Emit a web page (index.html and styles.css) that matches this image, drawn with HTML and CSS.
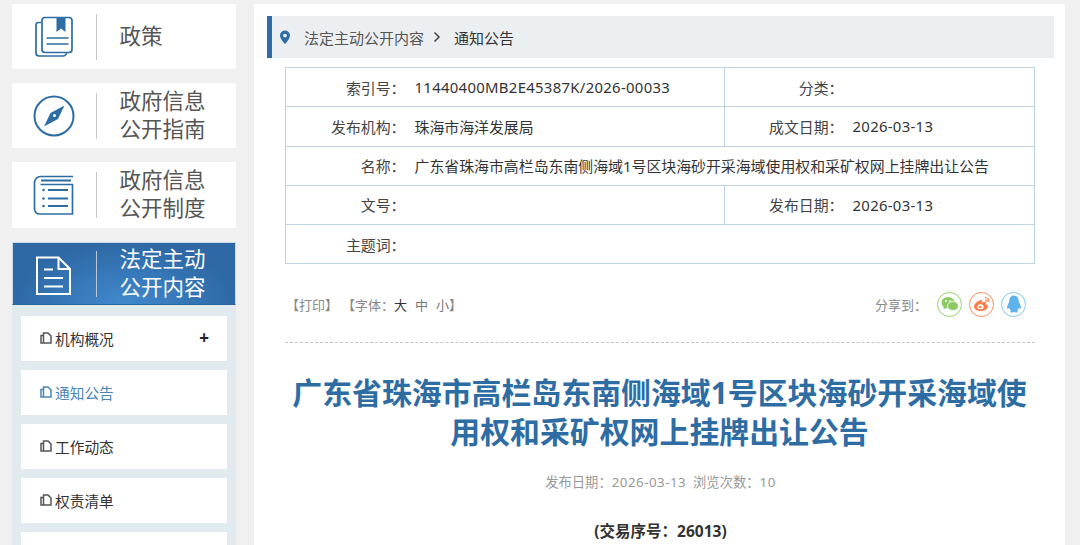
FILE: index.html
```html
<!DOCTYPE html>
<html lang="zh-CN">
<head>
<meta charset="utf-8">
<title>通知公告</title>
<link rel="stylesheet" href="styles.css">
</head>
<body>
<div class="page">
  <aside class="side">
    <a class="card">
      <span class="card-icon">
        <svg width="60" height="65" viewBox="0 0 60 65"><g fill="none" stroke="#2e6da4" stroke-width="1.700"><path d="M9 18.500H6.500a2.500 2.500 0 0 0-2.500 2.500V49a3 3 0 0 0 3 3H31a3.500 3.500 0 0 0 3.500-3.500"/><rect x="10" y="13.500" width="30" height="35" rx="3"/><path d="M14.500 34H36.500M14.500 40H36.500"/></g><path d="M24.500 13.500H33.500V28L29 24.500 24.500 28Z" fill="#2e6da4"/></svg>
      </span>
      <span class="card-text"><span>政策</span></span>
    </a>
    <a class="card">
      <span class="card-icon">
        <svg width="60" height="65" viewBox="0 0 60 65"><circle cx="22" cy="33" r="19.500" fill="none" stroke="#2e6da4" stroke-width="2"/><path d="M32.500 22.500 26 36 12 43.500 18.500 30Z" fill="#2e6da4"/><circle cx="22.500" cy="32.500" r="1.500" fill="#fff"/></svg>
      </span>
      <span class="card-text"><span>政府信息<br>公开指南</span></span>
    </a>
    <a class="card">
      <span class="card-icon">
        <svg width="60" height="66" viewBox="0 0 60 66"><g fill="none" stroke="#2e6da4"><path d="M41 14.500H8.500a6 6 0 0 0-6 6V47a5 5 0 0 0 5 5H40.500V22.500H8.500" stroke-width="1.700"/><path d="M9 18.500H39M16 28H36M16 36.500H36M16 44H36" stroke-width="2"/></g><g fill="#2e6da4"><circle cx="11.500" cy="28" r="1.300"/><circle cx="11.500" cy="36.500" r="1.300"/><circle cx="11.500" cy="44" r="1.300"/></g></svg>
      </span>
      <span class="card-text"><span>政府信息<br>公开制度</span></span>
    </a>
    <a class="card card-active">
      <span class="card-icon">
        <svg width="60" height="63" viewBox="0 0 60 63"><g fill="none" stroke="#fff" stroke-width="2"><path d="M6 14.500H27.500L39 26V51H6Z"/><path d="M27.500 14.500V26H39"/><path d="M13 26.500H22M13 35H32M13 43.500H32"/></g></svg>
      </span>
      <span class="card-text"><span>法定主动<br>公开内容</span></span>
    </a>
    <nav class="sub">
      <a class="sub-item">
        <svg class="copy" width="12" height="13" viewBox="0 0 12 13"><path d="M3.500 11H1V3.500H3.500M3.500 1H8L11 4V11H3.500Z" fill="none" stroke="currentColor" stroke-width="1.500"/></svg>
        <span>机构概况</span><b class="plus">+</b>
      </a>
      <a class="sub-item sub-current">
        <svg class="copy" width="12" height="13" viewBox="0 0 12 13"><path d="M3.500 11H1V3.500H3.500M3.500 1H8L11 4V11H3.500Z" fill="none" stroke="currentColor" stroke-width="1.500"/></svg>
        <span>通知公告</span>
      </a>
      <a class="sub-item">
        <svg class="copy" width="12" height="13" viewBox="0 0 12 13"><path d="M3.500 11H1V3.500H3.500M3.500 1H8L11 4V11H3.500Z" fill="none" stroke="currentColor" stroke-width="1.500"/></svg>
        <span>工作动态</span>
      </a>
      <a class="sub-item">
        <svg class="copy" width="12" height="13" viewBox="0 0 12 13"><path d="M3.500 11H1V3.500H3.500M3.500 1H8L11 4V11H3.500Z" fill="none" stroke="currentColor" stroke-width="1.500"/></svg>
        <span>权责清单</span>
      </a>
      <a class="sub-item"></a>
    </nav>
  </aside>

  <main class="panel">
    <div class="crumb">
      <svg class="pin" width="12" height="15" viewBox="0 0 12 15"><path fill-rule="evenodd" d="M6 0.500A5 5 0 0 1 11 5.500C11 9 6 14 6 14S1 9 1 5.500A5 5 0 0 1 6 0.500ZM6 3.700A1.900 1.900 0 1 0 6 7.500 1.900 1.900 0 0 0 6 3.700Z" fill="#2e6da4"/></svg>
      <span class="crumb-parent">法定主动公开内容</span>
      <svg class="chev" width="8" height="12" viewBox="0 0 8 12"><path d="M1.500 1.500 6 6 1.500 10.500" fill="none" stroke="#444" stroke-width="1.500"/></svg>
      <span class="crumb-current">通知公告</span>
    </div>

    <table class="info">
      <colgroup><col class="c1"><col class="c2"><col class="c3"><col class="c4"></colgroup>
      <tr><th>索引号&#xFF1A;</th><td class="num">11440400MB2E45387K/2026-00033</td><th>分类&#xFF1A;</th><td></td></tr>
      <tr><th>发布机构&#xFF1A;</th><td>珠海市海洋发展局</td><th>成文日期&#xFF1A;</th><td class="num">2026-03-13</td></tr>
      <tr><th>名称&#xFF1A;</th><td colspan="3">广东省珠海市高栏岛东南侧海域1号区块海砂开采海域使用权和采矿权网上挂牌出让公告</td></tr>
      <tr><th>文号&#xFF1A;</th><td></td><th>发布日期&#xFF1A;</th><td class="num">2026-03-13</td></tr>
      <tr><th>主题词&#xFF1A;</th><td colspan="3"></td></tr>
    </table>

    <div class="tools">
      <div class="tools-left">
        <span>【打印】</span>
        <span class="font-size">【字体&#xFF1A;<i class="big">大</i><i>中</i><i>小</i>】</span>
      </div>
      <div class="share">
        <span class="share-label">分享到&#xFF1A;</span>
        <span class="share-btn wx">
          <svg width="18" height="16" viewBox="0 0 18 16"><ellipse cx="7" cy="6.500" rx="6.500" ry="5.500" fill="#8ccb63"/><path d="M3 10 2.500 13.500 6.500 11Z" fill="#8ccb63"/><ellipse cx="12" cy="10" rx="5.500" ry="4.500" fill="#8ccb63" stroke="#fff" stroke-width=".8"/><circle cx="5" cy="5" r=".9" fill="#fff"/><circle cx="9" cy="5" r=".9" fill="#fff"/></svg>
        </span>
        <span class="share-btn wb">
          <svg width="18" height="16" viewBox="0 0 18 16"><path d="M7.500 4C3.500 5.500 1 8.500 1 10.500 1 13.500 4.500 15 8 15c4 0 7-2.300 7-4.500 0-1.500-1.300-2-2.300-2.300 1-2.200-.7-3.200-4-1.700.6-1.800.3-3.500-1.200-2.500Z" fill="#fa7d4a"/><ellipse cx="7.500" cy="10.800" rx="3.200" ry="2.500" fill="#fff"/><circle cx="7" cy="11" r="1.300" fill="#fa7d4a"/><path d="M12 1.500c2.700 0 4.500 2 4 4.700M12 3.800c1.200 0 2 .8 1.800 2" fill="none" stroke="#fa7d4a" stroke-width="1.200"/></svg>
        </span>
        <span class="share-btn qq">
          <svg width="16" height="18" viewBox="0 0 16 18"><path d="M8 .5C4.800.5 3.300 3 3.300 6 3.300 7.500 1 10 1 12.500 1 14 2 14 3 12.800 3.500 14 4 15 5 15.500 3.800 16 3.700 17.500 6 17.500 7 17.500 7.700 17 8 16.700 8.300 17 9 17.500 10 17.500 12.300 17.500 12.200 16 11 15.500 12 15 12.500 14 13 12.800 14 14 15 14 15 12.500 15 10 12.700 7.500 12.700 6 12.700 3 11.200.5 8 .5Z" fill="#5fb3ec"/></svg>
        </span>
      </div>
    </div>

    <h1 class="title">广东省珠海市高栏岛东南侧海域1号区块海砂开采海域使用权和采矿权网上挂牌出让公告</h1>
    <p class="meta">发布日期&#xFF1A;<span class="num">2026-03-13</span>&nbsp;&nbsp;浏览次数&#xFF1A;<span class="num">10</span></p>
    <p class="serial">(交易序号&#xFF1A;26013)</p>
  </main>
</div>
</body>
</html>
```
FILE: styles.css
```css
* { box-sizing: border-box; }
html, body { margin: 0; height: 545px; overflow: hidden; }
body {
  background: #f0f0f0;
  font-family: "Noto Sans", "Noto Sans CJK SC", sans-serif;
  color: #333;
}
.page { display: flex; height: 545px; overflow: hidden; }

/* sidebar */
.side { width: 224px; margin: 4px 0 0 12px; flex: none; }
.card {
  display: flex;
  align-items: center;
  height: 65px;
  background: #fff;
  margin-bottom: 14px;
  color: #555;
}
.card:nth-child(3) { height: 66px; }
.card-icon { width: 84px; flex: none; padding-left: 20px; height: 100%; display: flex; }
.card-icon svg { display: block; }
.card-text {
  border-left: 1px solid #c8c8c8;
  padding-left: 22.500px;
  height: 46px;
  display: flex;
  align-items: center;
  font-size: 21.500px;
  line-height: 28px;
}
.card-text span { padding-bottom: 2px; }
.card-active {
  height: 63px;
  margin-bottom: 0;
  color: #fff;
  border: 1px solid #c7dbe9;
  border-bottom-color: #2d659f;
  background: radial-gradient(ellipse 110px 60px at 50% 100%, #4189cd 0%, #2e69a6 100%);
}
.card-active .card-icon { padding-left: 18px; margin-top: -1px; margin-right: 0; }
.card-active .card-text { border-left-color: #b9c7d6; margin-left: -1px; }
.sub {
  background: #e1eaef;
  padding: 11px 9px 0;
  height: 240px;
  display: flex;
  flex-direction: column;
  gap: 9px;
}
.sub-item {
  flex: none;
  height: 45px;
  background: #fff;
  display: flex;
  align-items: center;
  padding-left: 19px;
  font-size: 14.700px;
  color: #333;
}
.sub-item span { margin-left: 3px; padding-bottom: 1px; }
.copy { color: #555; flex: none; }
.plus { margin-left: auto; margin-right: 18px; font-size: 17px; line-height: 1; color: #222; padding-bottom: 2px; }
.sub-current, .sub-current .copy { color: #4a86b8; }

/* main panel */
.panel {
  width: 811px;
  margin: 4px 0 0 18px;
  flex: none;
  background: #fff;
  padding: 12px 11px 0 13px;
  height: 541px;
  overflow: hidden;
}
.crumb {
  height: 42px;
  background: #eceff2;
  border-left: 5px solid #2e6da4;
  display: flex;
  align-items: center;
  padding-left: 7px;
  font-size: 15px;
}
.crumb-parent { margin-left: 13px; color: #555; }
.chev { margin: 0 13px 0 9px; }
.crumb-current { color: #333; }

.info {
  width: 750px;
  margin: 9px 0 0 18px;
  border-collapse: collapse;
  table-layout: fixed;
  font-size: 14.900px;
}
.c1 { width: 120px; }
.c2 { width: 319px; }
.c3 { width: 119px; }
.info th, .info td {
  border: 1px solid #bcd4e6;
  height: 39.250px;
  padding: 0;
  font-weight: 400;
  white-space: nowrap;
}
.info th { text-align: right; color: #444; border-right: 0; }
.info td { padding-left: 9px; border-left: 0; color: #333; }
.num { letter-spacing: .3px; }

.tools {
  margin: 0 0 0 18px;
  width: 750px;
  height: 79px;
  border-bottom: 1px dashed #c4c4c4;
  display: flex;
  justify-content: space-between;
  padding: 24px 9px 0 1px;
  font-size: 13px;
  color: #888;
}
.tools-left { display: flex; gap: 4px; height: 32px; align-items: center; }
.font-size i { font-style: normal; margin-left: 8px; color: #777; }
.font-size i.big { color: #333; margin-left: 0; }
.share { display: flex; align-items: center; height: 26px; margin-top: 3px; gap: 7px; }
.share-label { margin-right: 3px; font-size: 13px; color: #888; }
.share-btn {
  width: 25px;
  height: 25px;
  border-radius: 50%;
  border: 1px solid;
  display: flex;
  align-items: center;
  justify-content: center;
  background: #fff;
}
.wx { border-color: #96d270; }
.wb { border-color: #fb8e62; }
.qq { border-color: #7fc6f0; }

.title {
  margin: 30px 0 0;
  padding: 0 17px 0 15px;
  font-size: 29.900px;
  line-height: 39px;
  font-weight: 700;
  text-align: center;
  color: #2e6da4;
}
.meta {
  margin: 21px 0 0;
  font-size: 13.300px;
  line-height: 20px;
  color: #999;
  text-align: center;
}
.meta .num { letter-spacing: .5px; }
.serial {
  margin: 29px 0 0;
  font-size: 15.500px;
  line-height: 20px;
  font-weight: 700;
  color: #333;
  text-align: center;
}
```
